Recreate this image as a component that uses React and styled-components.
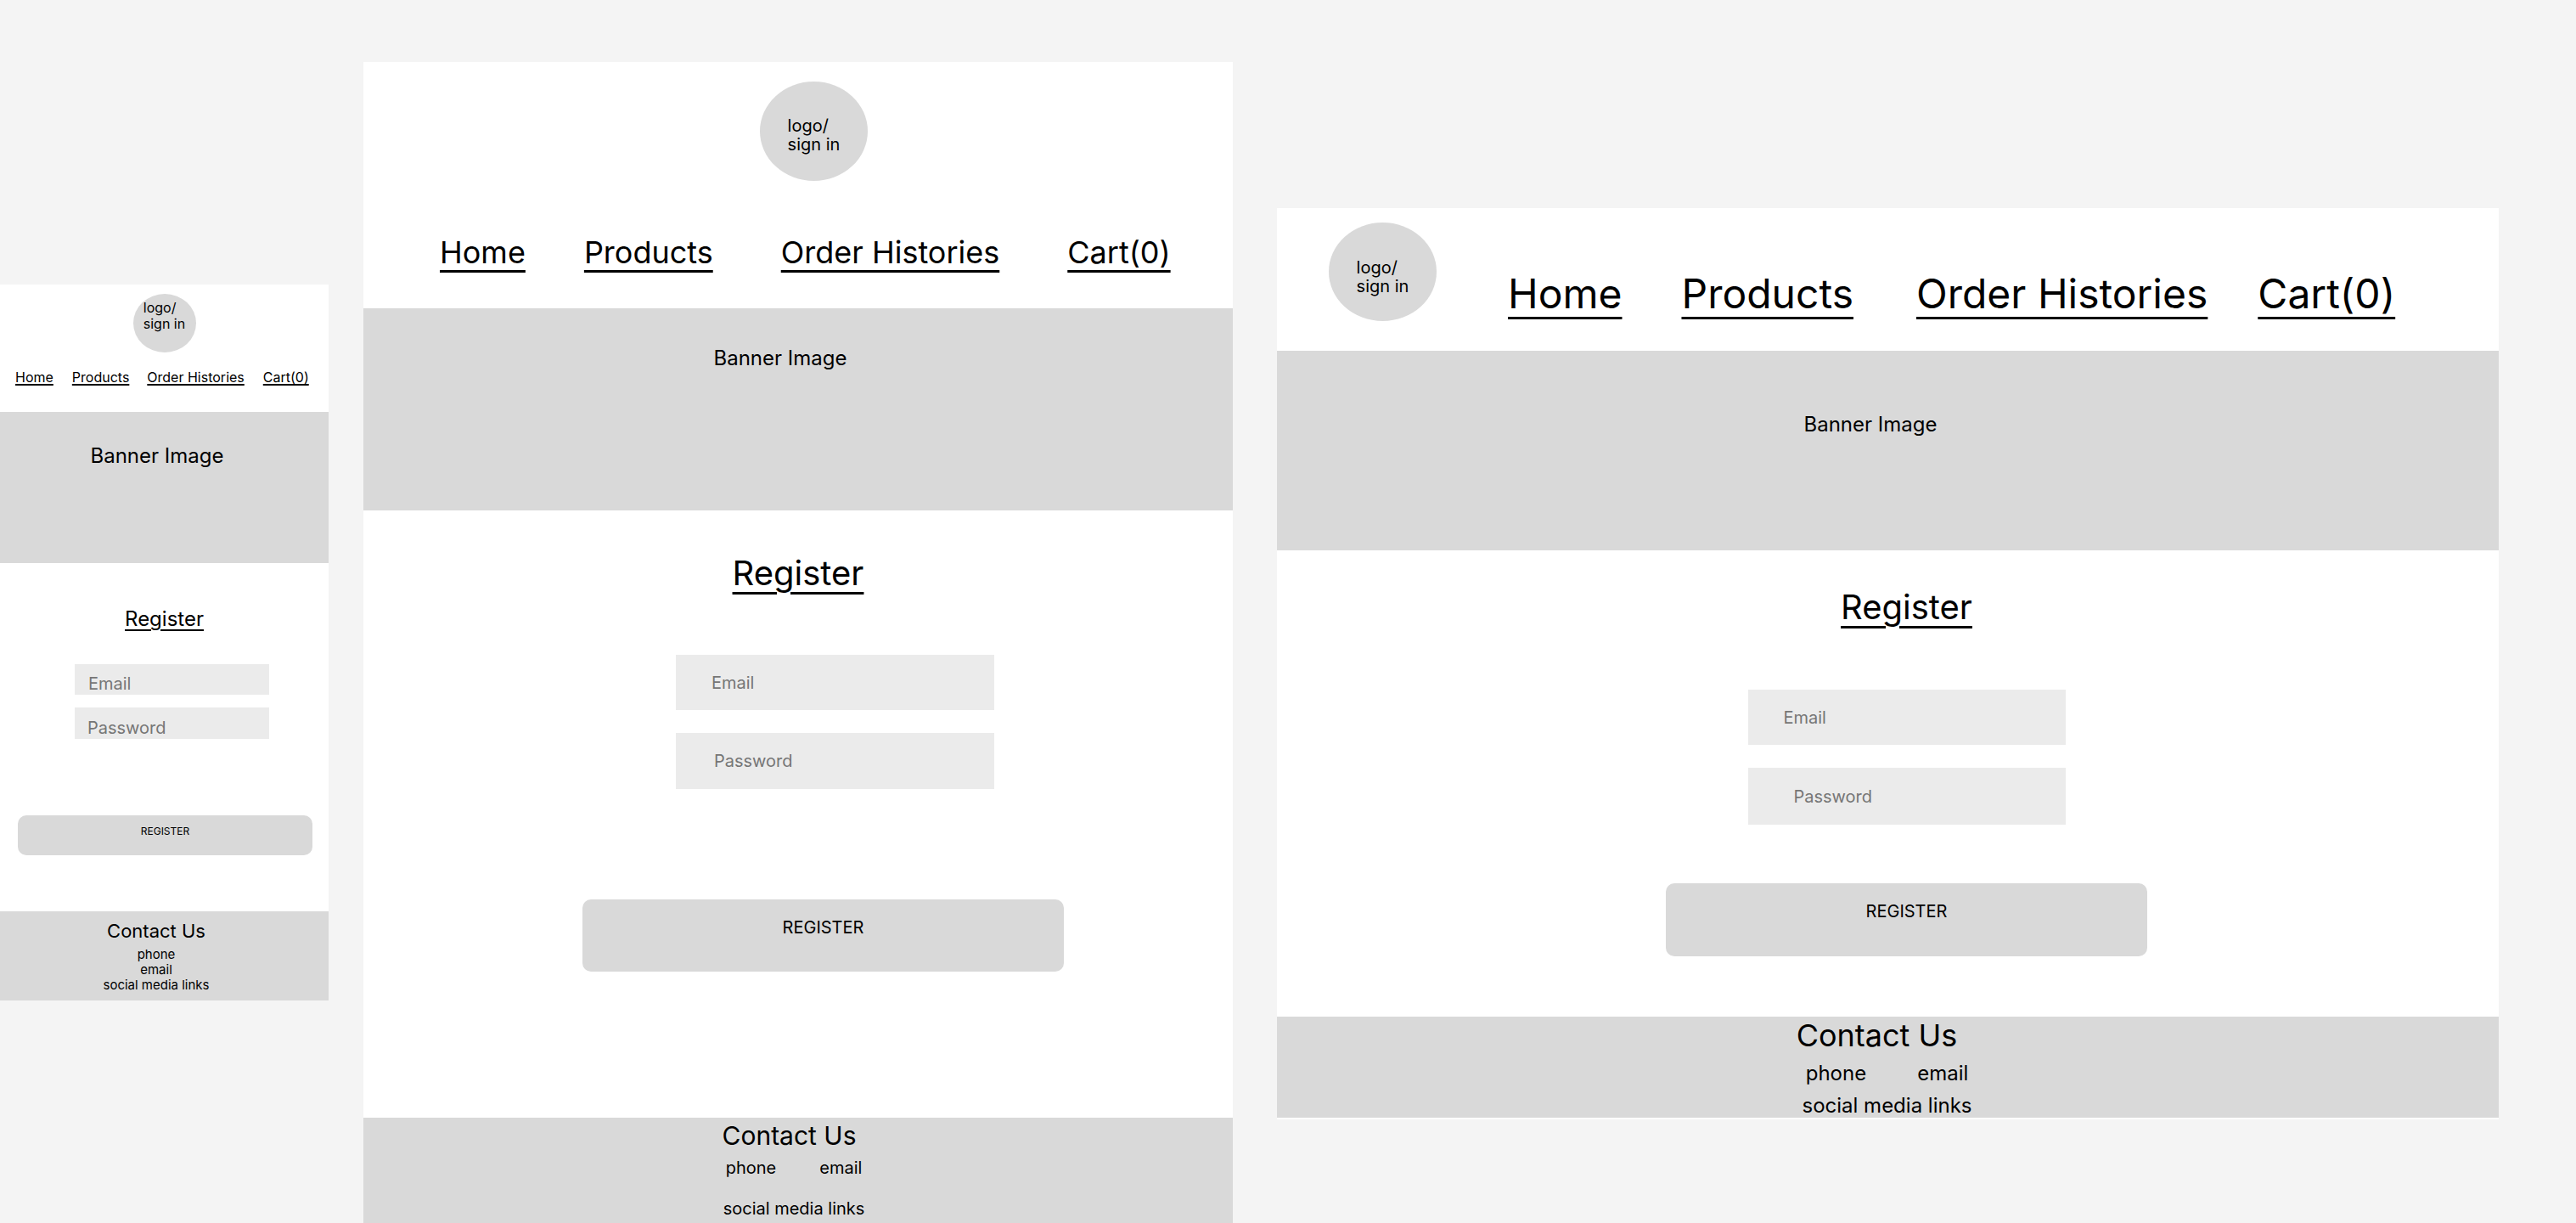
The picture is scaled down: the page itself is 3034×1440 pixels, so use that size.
import React from "react";
import styled, { createGlobalStyle } from "styled-components";

const GlobalStyle = createGlobalStyle`
  html, body {
    margin: 0;
    padding: 0;
  }
  body {
    background: #f4f4f4;
    font-family: Inter, "Noto Sans", sans-serif;
    color: #000;
    overflow: hidden;
  }
  * {
    box-sizing: border-box;
  }
`;

// moves a centred item sideways by s px
const shiftX = (s = 0) =>
  s >= 0 ? `margin-left: ${2 * s}px;` : `margin-right: ${-2 * s}px;`;

const NAV = ["Home", "Products", "Order Histories", "Cart(0)"];

const mobile = {
  frame: { w: 387, top: 335, left: 0, pb: 0 },
  header: { row: false, pt: 11, pb: 0, pl: 0 },
  logo: { w: 74, h: 69, font: 16, lh: 19, nudge: -9, shift: 0 },
  nav: { mt: 21, ml: 18, gaps: [0, 22, 21, 22], font: 16, thick: 2, offset: 2 },
  banner: { mt: 33, h: 178, pt: 40, pr: 17 },
  form: { shift: 0 },
  title: { mt: 54, font: 24, thick: 2, offset: 4 },
  email: { mt: 41, w: 229, h: 36, pl: 16, pt: 10, shift: 9 },
  password: { mt: 15, w: 229, h: 37, pl: 15, pt: 10, shift: 9 },
  button: { mt: 90, w: 347, h: 47, font: 12, pt: 13, shift: 1 },
  footer: { mt: 66, pt: 12, pb: 9.5, pr: 19, title: 22, titleShift: 0, stack: true, font: 15, lh: 18, listMt: 7.5 },
};

const tablet = {
  frame: { w: 1024, top: 73, left: 41, pb: 0 },
  header: { row: false, pt: 23, pb: 0, pl: 0 },
  logo: { w: 127, h: 117, font: 20, lh: 22, nudge: 4.5, shift: 18.5 },
  nav: { mt: 66, ml: 90, gaps: [0, 69, 80, 80], font: 36, thick: 3, offset: 8 },
  banner: { mt: 48, h: 238, pt: 47, pr: 42 },
  form: { shift: 0 },
  title: { mt: 54, font: 40, thick: 3, offset: 8 },
  email: { mt: 76, w: 375, h: 65, pl: 42, pt: 0, shift: 43.5 },
  password: { mt: 27, w: 375, h: 66, pl: 45, pt: 0, shift: 43.5 },
  button: { mt: 130, w: 567, h: 85, font: 20, pt: 23, shift: 29.5 },
  footer: { mt: 172, pt: 6, pb: 40, pr: 10, title: 30, titleShift: -5.5, stack: false, font: 20, rowMt: 13, gap: 51, socialMt: 28 },
};

const desktop = {
  frame: { w: 1439, top: 245, left: 52, pb: 2 },
  header: { row: true, pt: 17, pb: 35, pl: 61 },
  logo: { w: 127, h: 116, font: 20, lh: 22, nudge: 5.7, shift: 0 },
  nav: { mt: 60, ml: 84, gaps: [0, 70, 74, 59], font: 48, thick: 3, offset: 10 },
  banner: { mt: 0, h: 235, pt: 75, pr: 41 },
  form: { shift: 22 },
  title: { mt: 47, font: 40, thick: 3, offset: 8 },
  email: { mt: 77, w: 374, h: 65, pl: 42, pt: 0, shift: 0 },
  password: { mt: 27, w: 374, h: 67, pl: 54, pt: 0, shift: 0 },
  button: { mt: 69, w: 567, h: 86, font: 20, pt: 23, shift: 0 },
  footer: { mt: 71, pt: 4, pb: 2, pr: 2, title: 36, titleShift: -12, stack: false, font: 24, rowMt: 15, gap: 60, socialMt: 14 },
};

function RegisterScreen({ v }) {
  const { header, logo, nav, banner, title, email, password, button, footer } = v;
  return (
    <Frame $w={v.frame.w} $top={v.frame.top} $left={v.frame.left} $pb={v.frame.pb}>
      <Header $row={header.row} $pt={header.pt} $pb={header.pb} $pl={header.pl}>
        <Logo $w={logo.w} $h={logo.h} $font={logo.font} $lh={logo.lh} $nudge={logo.nudge} $shift={logo.shift}>
          <LogoText>
            logo/
            <br />
            sign in
          </LogoText>
        </Logo>
        <Nav $row={header.row} $mt={nav.mt} $ml={nav.ml}>
          {NAV.map((item, i) => (
            <NavLink
              key={item}
              href="#"
              $ml={nav.gaps[i]}
              $font={nav.font}
              $thick={nav.thick}
              $offset={nav.offset}
            >
              {item}
            </NavLink>
          ))}
        </Nav>
      </Header>

      <Banner $mt={banner.mt} $h={banner.h} $pt={banner.pt} $pr={banner.pr}>
        Banner Image
      </Banner>

      <Form $shift={v.form.shift} onSubmit={(e) => e.preventDefault()}>
        <Title $mt={title.mt} $font={title.font} $thick={title.thick} $offset={title.offset}>
          Register
        </Title>
        <Field
          type="email"
          placeholder="Email"
          $mt={email.mt} $w={email.w} $h={email.h} $pl={email.pl} $pt={email.pt} $shift={email.shift}
        />
        <Field
          type="password"
          placeholder="Password"
          $mt={password.mt} $w={password.w} $h={password.h} $pl={password.pl} $pt={password.pt} $shift={password.shift}
        />
        <SubmitButton
          type="submit"
          $mt={button.mt} $w={button.w} $h={button.h} $font={button.font} $pt={button.pt} $shift={button.shift}
        >
          REGISTER
        </SubmitButton>
      </Form>

      <Footer $mt={footer.mt} $pt={footer.pt} $pb={footer.pb} $pr={footer.pr}>
        <ContactTitle $font={footer.title} $shift={footer.titleShift}>Contact Us</ContactTitle>
        {footer.stack ? (
          <ContactList $mt={footer.listMt} $font={footer.font} $lh={footer.lh}>
            <span>phone</span>
            <span>email</span>
            <span>social media links</span>
          </ContactList>
        ) : (
          <>
            <ContactList $row $gap={footer.gap} $mt={footer.rowMt} $font={footer.font}>
              <span>phone</span>
              <span>email</span>
            </ContactList>
            <ContactList $mt={footer.socialMt} $font={footer.font}>
              <span>social media links</span>
            </ContactList>
          </>
        )}
      </Footer>
    </Frame>
  );
}

export default function App() {
  return (
    <>
      <GlobalStyle />
      <Canvas>
        <RegisterScreen v={mobile} />
        <RegisterScreen v={tablet} />
        <RegisterScreen v={desktop} />
      </Canvas>
    </>
  );
}

const Canvas = styled.main`
  display: flex;
  align-items: flex-start;
  height: 1440px;
  overflow: hidden;
`;

const Frame = styled.section`
  flex-shrink: 0;
  display: flex;
  flex-direction: column;
  width: ${(p) => p.$w}px;
  margin-top: ${(p) => p.$top}px;
  margin-left: ${(p) => p.$left}px;
  padding-bottom: ${(p) => p.$pb}px;
  background: #fff;
`;

const Header = styled.header`
  display: flex;
  flex-direction: ${(p) => (p.$row ? "row" : "column")};
  align-items: ${(p) => (p.$row ? "flex-start" : "center")};
  padding: ${(p) => `${p.$pt}px 0 ${p.$pb}px ${p.$pl}px`};
`;

const Logo = styled.div`
  flex-shrink: 0;
  display: flex;
  align-items: center;
  justify-content: center;
  width: ${(p) => p.$w}px;
  height: ${(p) => p.$h}px;
  ${(p) => (p.$nudge >= 0 ? `padding-top: ${2 * p.$nudge}px;` : `padding-bottom: ${-2 * p.$nudge}px;`)}
  ${(p) => shiftX(p.$shift)}
  border-radius: 50%;
  background: #d9d9d9;
  font-size: ${(p) => p.$font}px;
  line-height: ${(p) => p.$lh}px;
`;

const LogoText = styled.span`
  text-align: left;
  white-space: nowrap;
`;

const Nav = styled.nav`
  display: flex;
  margin-top: ${(p) => p.$mt}px;
  ${(p) => (p.$row ? `margin-left: ${p.$ml}px;` : `align-self: stretch; padding-left: ${p.$ml}px;`)}
`;

const NavLink = styled.a`
  margin-left: ${(p) => p.$ml}px;
  font-size: ${(p) => p.$font}px;
  line-height: 1;
  color: #000;
  white-space: nowrap;
  text-decoration: underline;
  text-decoration-thickness: ${(p) => p.$thick}px;
  text-underline-offset: ${(p) => p.$offset}px;
`;

const Banner = styled.div`
  display: flex;
  justify-content: center;
  height: ${(p) => p.$h}px;
  margin-top: ${(p) => p.$mt}px;
  padding: ${(p) => `${p.$pt}px ${p.$pr}px 0 0`};
  background: #d9d9d9;
  font-size: 24px;
  line-height: 1;
`;

const Form = styled.form`
  display: flex;
  flex-direction: column;
  align-items: center;
  margin: 0;
  ${(p) => shiftX(p.$shift)}
`;

const Title = styled.h1`
  margin: ${(p) => p.$mt}px 0 0;
  font-size: ${(p) => p.$font}px;
  font-weight: 400;
  line-height: 1;
  text-decoration: underline;
  text-decoration-thickness: ${(p) => p.$thick}px;
  text-underline-offset: ${(p) => p.$offset}px;
`;

const Field = styled.input`
  display: block;
  width: ${(p) => p.$w}px;
  height: ${(p) => p.$h}px;
  margin-top: ${(p) => p.$mt}px;
  ${(p) => shiftX(p.$shift)}
  padding: ${(p) => `${p.$pt}px 0 0 ${p.$pl}px`};
  border: none;
  border-radius: 0;
  background: #ebebeb;
  font-family: inherit;
  font-size: 20px;
  line-height: 20px;
  color: #000;
  outline: none;

  &::placeholder {
    color: #767676;
    opacity: 1;
  }
`;

const SubmitButton = styled.button`
  display: flex;
  justify-content: center;
  align-items: flex-start;
  width: ${(p) => p.$w}px;
  height: ${(p) => p.$h}px;
  margin-top: ${(p) => p.$mt}px;
  ${(p) => shiftX(p.$shift)}
  padding: ${(p) => `${p.$pt}px 0 0`};
  border: none;
  border-radius: 10px;
  background: #d9d9d9;
  font-family: inherit;
  font-size: ${(p) => p.$font}px;
  line-height: 1;
  color: #000;
  cursor: pointer;
`;

const Footer = styled.footer`
  display: flex;
  flex-direction: column;
  align-items: center;
  margin-top: ${(p) => p.$mt}px;
  padding: ${(p) => `${p.$pt}px ${p.$pr}px ${p.$pb}px 0`};
  background: #d9d9d9;
`;

const ContactTitle = styled.h2`
  margin: 0;
  font-size: ${(p) => p.$font}px;
  font-weight: 400;
  line-height: 1;
  ${(p) => shiftX(p.$shift)}
`;

const ContactList = styled.div`
  display: flex;
  flex-direction: ${(p) => (p.$row ? "row" : "column")};
  align-items: center;
  gap: ${(p) => p.$gap || 0}px;
  margin-top: ${(p) => p.$mt}px;
  font-size: ${(p) => p.$font}px;
  line-height: ${(p) => (p.$lh ? `${p.$lh}px` : 1)};
`;
